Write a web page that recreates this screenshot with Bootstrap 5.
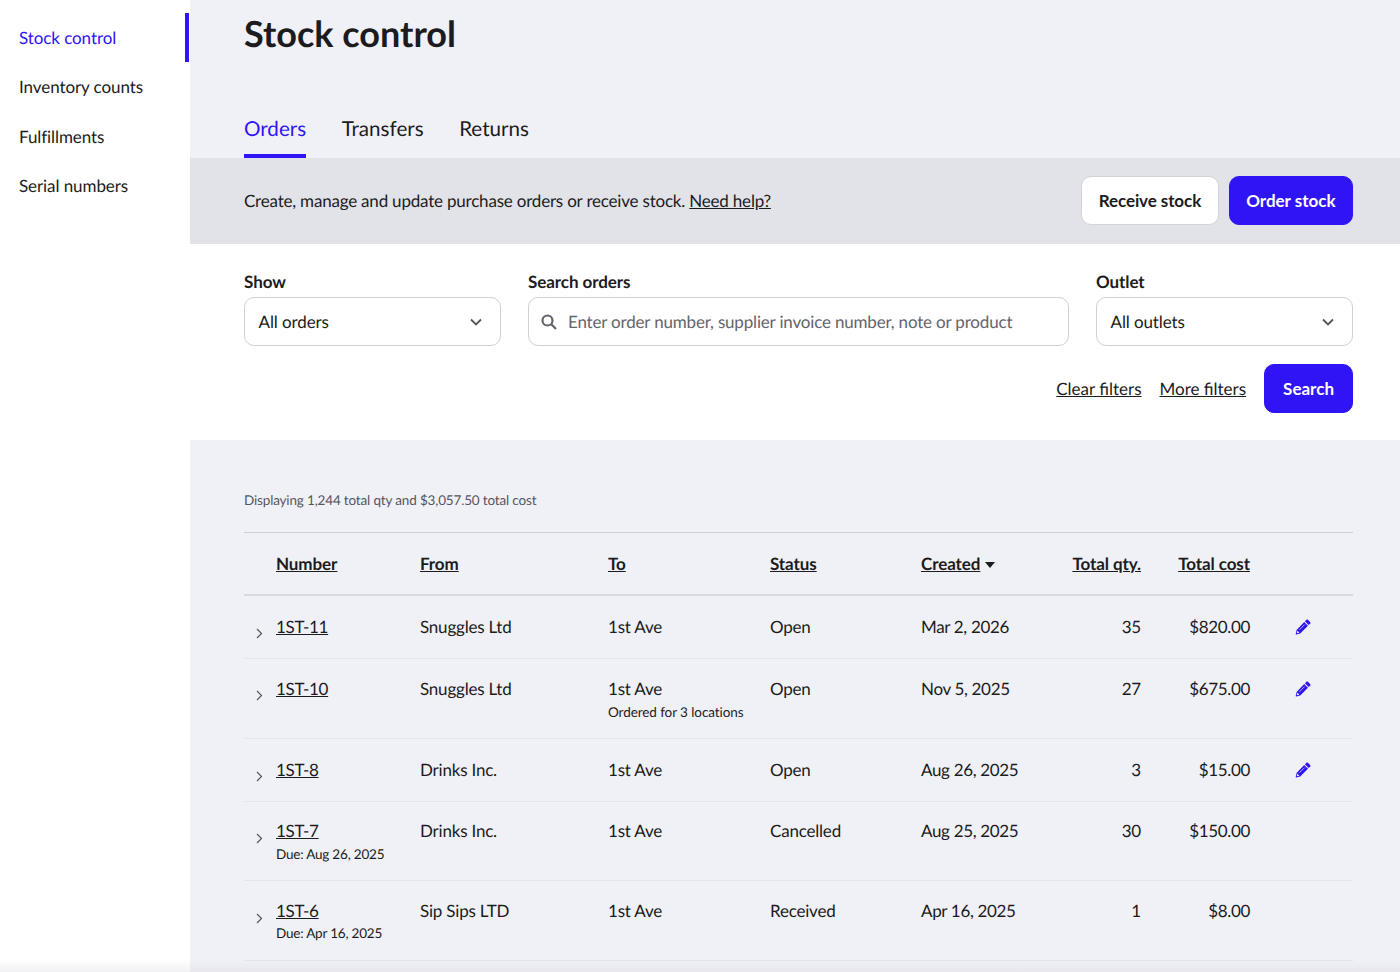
<!DOCTYPE html>
<html lang="en">
<head>
<meta charset="utf-8">
<title>Stock control</title>
<link href="https://cdn.jsdelivr.net/npm/bootstrap@5.3.0/dist/css/bootstrap.min.css" rel="stylesheet">
<style>
html,body{height:972px;overflow:hidden}
body{font-family:Lato,"Liberation Sans",sans-serif;font-size:17px;color:#1b1b20;background:#f0f1f7;text-rendering:geometricPrecision}
a{color:inherit}
.app-shell{height:972px}
.side-nav{width:190px;flex:none;background:#fff;padding-top:13px}
.side-link{display:block;height:49.33px;line-height:50px;padding-left:19px;color:#1b1b20;text-decoration:none;letter-spacing:-.08px}
.side-link.is-on{color:#2f14f5;position:relative}
.side-link.is-on::after{content:"";position:absolute;right:1px;top:0;bottom:0;width:4px;background:#2f14f5}
.main-pane{flex:1;min-width:0}
.page-title{font-size:36px;font-weight:700;line-height:44px;margin:11px 0 0 54px;color:#1b1b20}
.tab-row{margin:52px 0 0 54px;gap:35.5px;height:51px}
.tab-item{font-size:20.6px;line-height:30px;padding-top:7px;text-decoration:none;color:#1b1b20;height:51px}
.tab-item.is-on{color:#2f14f5;border-bottom:4px solid #2f14f5}
.info-band{background:#e2e3e9;height:86px;padding:0 47px 1px 54px}
.band-copy{letter-spacing:-.2px}
.btn-group-top{gap:10px}
.btn-tall{height:49px;border-radius:10px;font-size:17px;font-weight:700;padding:0 16.5px;display:inline-flex;align-items:center}
.btn-ink{background:#2f14f5;color:#fff;border:1px solid #2f14f5}
.btn-ink:hover{background:#2f14f5;color:#fff}
.btn-wide{padding:0 18px}
.btn-pale{background:#fff;color:#1b1b20;border:1px solid #d3d4da;letter-spacing:-.08px}
.filter-area{background:#fff;height:196px;padding:27px 47px 0 54px}
.filter-grid{display:grid;grid-template-columns:257px 541px 257px;gap:27px}
.field-label{font-weight:700;font-size:17px;line-height:21px;margin-bottom:5px;display:block;letter-spacing:-.08px}
.field-box{height:49px;border:1px solid #cfd0d6;border-radius:10px;background:#fff;padding:0 18px 0 13.5px;display:flex;align-items:center;justify-content:space-between;letter-spacing:-.1px}
.search-box{padding-left:12px}
.field-hint{color:#64646c;margin-left:11px;letter-spacing:-.18px}
.filter-links{gap:18px;margin-top:18px}
.summary-note{font-size:13.5px;color:#55555d;margin:50px 47px 0 54px;line-height:20px;letter-spacing:-.16px}
.orders-wrap{margin:22px 47px 0 54px}
.orders-grid{table-layout:fixed;width:100%;margin:0;--bs-table-bg:transparent;border-top:1px solid #cfd0d6;color:#1b1b20}
.orders-grid col:nth-child(1){width:32px}
.orders-grid col:nth-child(2){width:144px}
.orders-grid col:nth-child(3){width:188px}
.orders-grid col:nth-child(4){width:162px}
.orders-grid col:nth-child(5){width:151px}
.orders-grid col:nth-child(6){width:130px}
.orders-grid col:nth-child(7){width:90px}
.orders-grid col:nth-child(8){width:109px}
.orders-grid th,.orders-grid td{padding:0;border-bottom:1px solid #e4e5ec;vertical-align:top;background:transparent;box-shadow:none}
.orders-grid thead th{height:62px;border-bottom:2px solid #d9dae1;font-weight:700;vertical-align:middle;letter-spacing:-.08px}
.orders-grid td{line-height:24px;letter-spacing:-.2px}
.orders-grid .rw-a td{padding-top:19px;height:64px}
.orders-grid .rw-b td{padding-top:18px;height:80px}
.orders-grid .rw-c td{padding-top:19px;height:63px}
.orders-grid .rw-d td{padding-top:17px;height:79px}
.orders-grid .rw-e td{padding-top:18px;height:80px}
.orders-grid td.pen-cell{padding-left:45px}
.sub-note{font-size:13.5px;line-height:20px;margin-top:1px;letter-spacing:-.2px}
.sub-note-wide{letter-spacing:-.08px}
.orders-grid td.digit-tight{letter-spacing:-.33px}
.num-cell{text-align:right}
.orders-grid td.chev-cell{padding-left:12px}
.chev-cell svg{display:block;margin-top:13px}
.rw-d .chev-cell svg,.rw-e .chev-cell svg{margin-top:14px}
.rw-e .sub-note{margin-top:0}
.pen-ico{display:block;margin-top:4px}
.sort-caret{margin-left:1px}
.edge-fade{position:fixed;left:0;right:0;bottom:0;height:12px;background:linear-gradient(to bottom,rgba(230,230,235,0),rgba(215,215,222,.35));pointer-events:none}
</style>
</head>
<body>
<div class="app-shell d-flex">
  <nav class="side-nav">
    <a class="side-link is-on" href="#">Stock control</a>
    <a class="side-link" href="#">Inventory counts</a>
    <a class="side-link" href="#">Fulfillments</a>
    <a class="side-link" href="#">Serial numbers</a>
  </nav>
  <main class="main-pane">
    <h1 class="page-title">Stock control</h1>
    <div class="tab-row d-flex">
      <a class="tab-item is-on" href="#">Orders</a>
      <a class="tab-item" href="#">Transfers</a>
      <a class="tab-item" href="#">Returns</a>
    </div>
    <div class="info-band d-flex align-items-center justify-content-between">
      <div class="band-copy">Create, manage and update purchase orders or receive stock. <a href="#">Need help?</a></div>
      <div class="d-flex btn-group-top">
        <button class="btn btn-tall btn-pale" type="button">Receive stock</button>
        <button class="btn btn-tall btn-ink" type="button">Order stock</button>
      </div>
    </div>
    <section class="filter-area">
      <div class="filter-grid">
        <div>
          <span class="field-label">Show</span>
          <div class="field-box"><span>All orders</span>
            <svg width="12" height="8" viewBox="0 0 12 8" fill="none" stroke="#55555d" stroke-width="1.8"><path d="M1 1.5l5 5 5-5"/></svg></div>
        </div>
        <div>
          <span class="field-label">Search orders</span>
          <div class="field-box search-box justify-content-start">
            <svg width="16" height="16" viewBox="0 0 16 16" fill="none" stroke="#64646c" stroke-width="2.2"><circle cx="6.5" cy="6.5" r="5"/><path d="M10.3 10.3l4.7 4.7"/></svg>
            <span class="field-hint">Enter order number, supplier invoice number, note or product</span></div>
        </div>
        <div>
          <span class="field-label">Outlet</span>
          <div class="field-box"><span>All outlets</span>
            <svg width="12" height="8" viewBox="0 0 12 8" fill="none" stroke="#55555d" stroke-width="1.8"><path d="M1 1.5l5 5 5-5"/></svg></div>
        </div>
      </div>
      <div class="filter-links d-flex justify-content-end align-items-center">
        <a href="#">Clear filters</a>
        <a href="#">More filters</a>
        <button class="btn btn-tall btn-ink btn-wide" type="button">Search</button>
      </div>
    </section>
    <p class="summary-note">Displaying 1,244 total qty and $3,057.50 total cost</p>
    <svg width="0" height="0" class="position-absolute"><defs>
      <symbol id="pen-sym" viewBox="0 0 16 16"><path fill="#2f14f5" fill-rule="evenodd" d="M11.3.9c.5-.5 1.3-.5 1.8 0l2 2c.5.5.5 1.3 0 1.8l-1.4 1.4-3.8-3.8zM9.2 3l3.8 3.8-7.8 7.8-4 .9c-.3.1-.6-.2-.5-.5l.9-4zM2.3 11.6l-.5 2.6 2.6-.5z"/><path stroke="#f0f1f7" stroke-width=".7" d="M9.6 5.6l-5.2 5.2"/></symbol>
      <symbol id="chev-sym" viewBox="0 0 7 11"><path fill="none" stroke="#55555d" stroke-width="1.2" d="M1 1l4.5 4.5L1 10"/></symbol>
    </defs></svg>
    <div class="orders-wrap">
      <table class="table orders-grid">
        <colgroup><col><col><col><col><col><col><col><col><col></colgroup>
        <thead><tr>
          <th></th><th><a href="#">Number</a></th><th><a href="#">From</a></th><th><a href="#">To</a></th><th><a href="#">Status</a></th>
          <th><a href="#">Created</a> <svg width="10" height="6" viewBox="0 0 10 6" fill="#1b1b20" class="align-middle sort-caret"><path d="M0 0h10L5 6z"/></svg></th>
          <th class="num-cell"><a href="#">Total qty.</a></th><th class="num-cell"><a href="#">Total cost</a></th><th></th>
        </tr></thead>
        <tbody>
          <tr class="rw-a">
            <td class="chev-cell"><svg width="7" height="11"><use href="#chev-sym"/></svg></td>
            <td class="digit-tight"><a href="#">1ST-11</a></td><td>Snuggles Ltd</td><td>1st Ave</td><td>Open</td><td class="digit-tight">Mar 2, 2026</td><td class="num-cell">35</td><td class="num-cell digit-tight">$820.00</td>
            <td class="pen-cell"><svg class="pen-ico" width="16" height="16"><use href="#pen-sym"/></svg></td>
          </tr>
          <tr class="rw-b">
            <td class="chev-cell"><svg width="7" height="11"><use href="#chev-sym"/></svg></td>
            <td class="digit-tight"><a href="#">1ST-10</a></td><td>Snuggles Ltd</td><td>1st Ave<div class="sub-note sub-note-wide">Ordered for 3 locations</div></td><td>Open</td><td class="digit-tight">Nov 5, 2025</td><td class="num-cell">27</td><td class="num-cell digit-tight">$675.00</td>
            <td class="pen-cell"><svg class="pen-ico" width="16" height="16"><use href="#pen-sym"/></svg></td>
          </tr>
          <tr class="rw-c">
            <td class="chev-cell"><svg width="7" height="11"><use href="#chev-sym"/></svg></td>
            <td class="digit-tight"><a href="#">1ST-8</a></td><td>Drinks Inc.</td><td>1st Ave</td><td>Open</td><td class="digit-tight">Aug 26, 2025</td><td class="num-cell">3</td><td class="num-cell digit-tight">$15.00</td>
            <td class="pen-cell"><svg class="pen-ico" width="16" height="16"><use href="#pen-sym"/></svg></td>
          </tr>
          <tr class="rw-d">
            <td class="chev-cell"><svg width="7" height="11"><use href="#chev-sym"/></svg></td>
            <td class="digit-tight"><a href="#">1ST-7</a><div class="sub-note">Due: Aug 26, 2025</div></td><td>Drinks Inc.</td><td>1st Ave</td><td>Cancelled</td><td class="digit-tight">Aug 25, 2025</td><td class="num-cell">30</td><td class="num-cell digit-tight">$150.00</td><td></td>
          </tr>
          <tr class="rw-e">
            <td class="chev-cell"><svg width="7" height="11"><use href="#chev-sym"/></svg></td>
            <td class="digit-tight"><a href="#">1ST-6</a><div class="sub-note">Due: Apr 16, 2025</div></td><td>Sip Sips LTD</td><td>1st Ave</td><td>Received</td><td class="digit-tight">Apr 16, 2025</td><td class="num-cell">1</td><td class="num-cell digit-tight">$8.00</td><td></td>
          </tr>
        </tbody>
      </table>
    </div>
  </main>
</div>
<div class="edge-fade"></div>
<script src="https://cdn.jsdelivr.net/npm/bootstrap@5.3.0/dist/js/bootstrap.bundle.min.js"></script>
</body>
</html>
